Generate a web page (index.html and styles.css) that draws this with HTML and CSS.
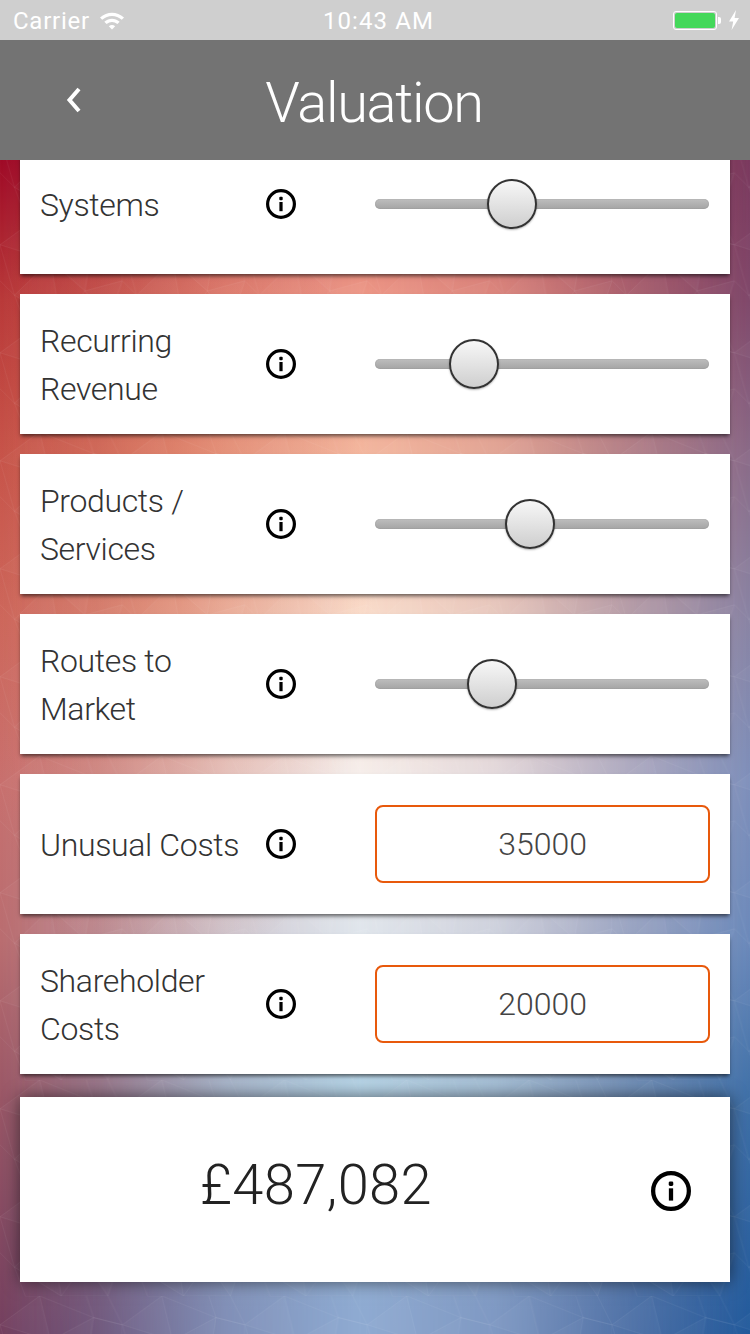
FILE: index.html
```html
<!DOCTYPE html>
<html lang="en">
<head>
  <meta charset="UTF-8" />
  <meta name="viewport" content="width=device-width, initial-scale=1.0"/>
  <title>Valuation</title>
  <link rel="stylesheet" href="styles.css">
</head>
<body>
  <!-- faint low-poly lines over the gradient -->
  <svg class="mesh" width="750" height="1334" aria-hidden="true">
    <defs>
      <pattern id="poly" width="170" height="150" patternUnits="userSpaceOnUse" patternTransform="scale(.72)">
        <path class="facet" d="M0 40L55 0L70 62Z M70 62L130 30L118 104Z M20 110L70 62L85 150Z M118 104L170 90L150 150Z"/>
        <path class="edge" d="M0 40L55 0L70 62L0 40M55 0L130 30L70 62L118 104L130 30L170 40M170 40L130 30M170 40L170 90L118 104L150 150L170 90M0 40L20 110L70 62M20 110L0 90M20 110L85 150L70 62M118 104L85 150M20 110L35 150M150 150L85 150M35 0L55 0M130 30L120 0M170 40L150 0"/>
      </pattern>
    </defs>
    <rect width="750" height="1334" fill="url(#poly)"/>
  </svg>

  <div class="status-bar">
    <div class="status-left">
      <span class="carrier">Carrier</span>
      <svg class="wifi" width="26" height="20" viewBox="0 0 26 20">
        <path d="M1 7.5C8 1 18 1 25 7.5L22.8 9.8C17 4.6 9 4.6 3.2 9.8Z"/>
        <path d="M5.3 11.8C10 7.6 16 7.6 20.7 11.8L18.4 14.1C15 11.2 11 11.2 7.6 14.1Z"/>
        <path d="M9.8 16.2C11.8 14.6 14.2 14.6 16.2 16.2L13 19.6Z"/>
      </svg>
    </div>
    <span class="status-time">10:43 AM</span>
    <div class="status-right">
      <span class="battery"><span class="battery-fill"></span></span>
      <span class="battery-nub"></span>
      <svg class="bolt" width="12" height="20" viewBox="0 0 12 20">
        <path d="M8 0L1 11.5H5.2L3.6 20L11 8H6.6Z"/>
      </svg>
    </div>
  </div>

  <header class="nav-bar">
    <a class="back" href="#back" aria-label="Back">
      <svg width="16" height="26" viewBox="0 0 16 26">
        <path d="M13 2L3.5 13L13 24"/>
      </svg>
    </a>
    <h1>Valuation</h1>
  </header>

  <main class="list">
    <section class="card">
      <div class="label">Systems</div>
      <svg class="info" viewBox="0 0 30 30"><circle cx="15" cy="15" r="13.4"/><rect class="dot" x="13.3" y="7.8" width="3.4" height="3.4" rx="1"/><rect class="dot" x="13.4" y="13" width="3.2" height="9.2"/></svg>
      <div class="control"><input class="slider" type="range" min="0" max="100" step="0.01" value="39.44"></div>
    </section>
    <section class="card">
      <div class="label">Recurring<br>Revenue</div>
      <svg class="info" viewBox="0 0 30 30"><circle cx="15" cy="15" r="13.4"/><rect class="dot" x="13.3" y="7.8" width="3.4" height="3.4" rx="1"/><rect class="dot" x="13.4" y="13" width="3.2" height="9.2"/></svg>
      <div class="control"><input class="slider" type="range" min="0" max="100" step="0.01" value="26.06"></div>
    </section>
    <section class="card">
      <div class="label">Products /<br>Services</div>
      <svg class="info" viewBox="0 0 30 30"><circle cx="15" cy="15" r="13.4"/><rect class="dot" x="13.3" y="7.8" width="3.4" height="3.4" rx="1"/><rect class="dot" x="13.4" y="13" width="3.2" height="9.2"/></svg>
      <div class="control"><input class="slider" type="range" min="0" max="100" step="0.01" value="45.77"></div>
    </section>
    <section class="card">
      <div class="label">Routes to<br>Market</div>
      <svg class="info" viewBox="0 0 30 30"><circle cx="15" cy="15" r="13.4"/><rect class="dot" x="13.3" y="7.8" width="3.4" height="3.4" rx="1"/><rect class="dot" x="13.4" y="13" width="3.2" height="9.2"/></svg>
      <div class="control"><input class="slider" type="range" min="0" max="100" step="0.01" value="32.39"></div>
    </section>
    <section class="card">
      <div class="label">Unusual Costs</div>
      <svg class="info" viewBox="0 0 30 30"><circle cx="15" cy="15" r="13.4"/><rect class="dot" x="13.3" y="7.8" width="3.4" height="3.4" rx="1"/><rect class="dot" x="13.4" y="13" width="3.2" height="9.2"/></svg>
      <div class="control"><input class="amount" type="text" value="35000"></div>
    </section>
    <section class="card">
      <div class="label">Shareholder<br>Costs</div>
      <svg class="info" viewBox="0 0 30 30"><circle cx="15" cy="15" r="13.4"/><rect class="dot" x="13.3" y="7.8" width="3.4" height="3.4" rx="1"/><rect class="dot" x="13.4" y="13" width="3.2" height="9.2"/></svg>
      <div class="control"><input class="amount" type="text" value="20000"></div>
    </section>
    <section class="total">
      <div class="total-value">£487,082</div>
      <svg class="info info-large" viewBox="0 0 30 30"><circle cx="15" cy="15" r="13.4"/><rect class="dot" x="13.3" y="7.8" width="3.4" height="3.4" rx="1"/><rect class="dot" x="13.4" y="13" width="3.2" height="9.2"/></svg>
    </section>
  </main>
</body>
</html>
```

FILE: styles.css
```css
* { box-sizing: border-box; margin: 0; padding: 0; }
html, body { height: 1334px; overflow: hidden; }
body {
  position: relative;
  width: 750px;
  font-family: Roboto, "Liberation Sans", sans-serif;
  font-weight: 300;
  color: #333;
  background: linear-gradient(to bottom, #a00c28 160px, #b8393a 300px, #c4524a 450px, #cb675e 620px, #c8706f 780px, #ba6d70 940px, #9a5766 1100px, #74405f 1334px);
}

/* background is three vertical gradients blended sideways */
body::before, body::after {
  content: "";
  position: absolute;
  inset: 0;
}
body::before {
  background: linear-gradient(to bottom, #7a3a5f 160px, #80496b 300px, #8a6a88 450px, #8a85a5 620px, #7e90bb 780px, #6b8abb 940px, #3f70a8 1100px, #225a9c 1334px);
  -webkit-mask-image: linear-gradient(to right, transparent 0, #000 100%);
}
body::after {
  background: linear-gradient(to bottom, #d06a60 160px, #ec9686 290px, #f3b69e 445px, #f9dccb 610px, #f6eeea 770px, #e0e6ec 930px, #b6d4e6 1085px, #8fabd2 1310px);
  -webkit-mask-image: linear-gradient(to right, transparent 0, rgba(0,0,0,.22) 13%, rgba(0,0,0,.72) 30%, #000 48%, rgba(0,0,0,.8) 66%, rgba(0,0,0,.3) 85%, transparent 100%);
}

/* the mesh layer also carries the orange glow on the left */
.mesh {
  position: absolute;
  top: 0;
  left: 0;
  z-index: 1;
  background: radial-gradient(ellipse 210px 470px at 165px 540px, rgba(240,105,55,.32), transparent);
}
.edge { fill: none; stroke: rgba(255,255,255,.07); stroke-width: 1; }
.facet { fill: rgba(255,255,255,.025); }

.status-bar {
  position: relative;
  z-index: 3;
  height: 40px;
  background: #cfcfcf;
  color: #fff;
  font-size: 24px;
  font-weight: 400;
  display: flex;
  align-items: center;
  justify-content: space-between;
  padding: 2px 10px 0 13px;
}
.status-left { display: flex; align-items: center; gap: 9px; width: 250px; }
.carrier { letter-spacing: .75px; }
.status-time { letter-spacing: 1.1px; margin-left: 4px; }
.status-right { display: flex; align-items: center; justify-content: flex-end; width: 250px; margin-top: -2px; }
.wifi, .bolt { fill: #fff; }
.wifi { margin-top: -2px; }
.battery { width: 44px; height: 19px; border: 1px solid #fff; border-radius: 3px; padding: 1px; display: block; }
.battery-fill { display: block; height: 100%; background: #44d85a; border-radius: 2px; }
.battery-nub { width: 3px; height: 7px; background: #fff; border-radius: 0 2px 2px 0; margin: 0 7px 0 1px; }

.nav-bar {
  position: relative;
  z-index: 3;
  height: 120px;
  background: #737373;
  display: flex;
  align-items: center;
  justify-content: center;
}
.nav-bar h1 { font-size: 56px; font-weight: 300; letter-spacing: -1.35px; color: #fff; margin-left: -2px; margin-top: 6px; }
.back { position: absolute; left: 66px; top: 47px; }
.back svg { display: block; fill: none; stroke: #fff; stroke-width: 4; }

.list {
  position: relative;
  z-index: 2;
  margin-top: -26px;
  padding: 0 20px;
  display: flex;
  flex-direction: column;
  gap: 20px;
}
.card {
  height: 140px;
  background: #fff;
  box-shadow: 0 3px 4px -1px rgba(0,0,0,.6);
  display: flex;
  align-items: center;
  padding: 0 20px;
}
.label { width: 226px; font-size: 32px; line-height: 48px; letter-spacing: -.35px; color: #333; margin-top: 2px; }
.info { width: 30px; height: 30px; flex: none; }
.info circle { fill: none; stroke: #000; stroke-width: 3.2; }
.dot { fill: #000; }
.control { margin-left: 79px; width: 335px; }

.slider {
  display: block;
  width: 334px;
  height: 50px;
  background: transparent;
  -webkit-appearance: none;
  appearance: none;
}
.slider::-webkit-slider-runnable-track {
  height: 10px;
  border-radius: 5px;
  background: linear-gradient(to bottom, #bdbdbd, #a4a4a4);
  box-shadow: inset 0 0 1px rgba(0,0,0,.3);
}
.slider::-webkit-slider-thumb {
  -webkit-appearance: none;
  width: 50px;
  height: 50px;
  margin-top: -20px;
  border: 2px solid #333;
  border-radius: 50%;
  background: linear-gradient(to bottom, #f7f7f7, #cfcfcf);
  box-shadow: 0 1px 2px rgba(0,0,0,.3);
}

.amount {
  display: block;
  width: 100%;
  height: 78px;
  border: 2px solid #e8590c;
  border-radius: 8px;
  background: #fff;
  text-align: center;
  font-family: inherit;
  font-weight: 300;
  font-size: 32px;
  color: #444;
}

.total {
  height: 185px;
  margin-top: 3px;
  background: #fff;
  box-shadow: 0 0 16px rgba(0,0,0,.55);
  display: flex;
  align-items: center;
  padding: 0 39px 0 180px;
}
.total-value { width: 230px; font-size: 56px; letter-spacing: .35px; color: #222; margin-top: -10px; white-space: nowrap; }
.info-large { width: 40px; height: 40px; margin-left: auto; margin-top: 2px; }
```
